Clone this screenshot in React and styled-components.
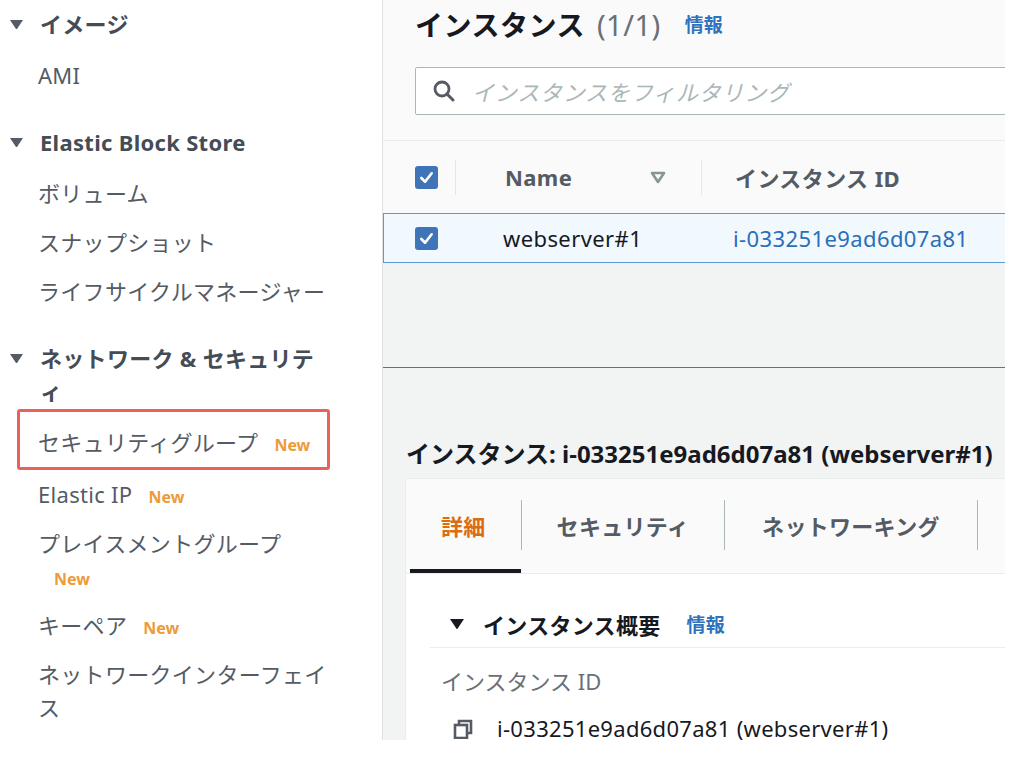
import React from 'react';
import styled, { createGlobalStyle } from 'styled-components';

const GlobalStyle = createGlobalStyle`
  html, body {
    margin: 0;
    padding: 0;
    background: #ffffff;
  }
  body {
    font-family: "Noto Sans", "Noto Sans CJK JP", sans-serif;
    -webkit-font-smoothing: antialiased;
  }
  * {
    box-sizing: border-box;
  }
`;

const Page = styled.div`
  display: flex;
  width: 1005px;
  height: 740px;
  overflow: hidden;
`;

/* ---------- side navigation ---------- */

const Sidebar = styled.nav`
  width: 383px;
  flex-shrink: 0;
  background: #ffffff;
  border-right: 1px solid #dfe2e4;
  color: #545b64;
  letter-spacing: 0.3px;
`;

const Section = styled.section`
  margin-bottom: 18px;
`;

const SectionHeading = styled.div`
  display: flex;
  align-items: flex-start;
  width: 331px;
  padding: 8px 0 10px 10px;
  font-size: 22px;
  font-weight: 700;
  line-height: 33px;
  color: #454c55;
`;

const CaretBox = styled.span`
  display: flex;
  align-items: center;
  width: 30px;
  height: 33px;
  flex-shrink: 0;
`;

const NavItem = styled.div`
  width: ${p => (p.$highlight ? '313px' : '331px')};
  margin: ${p => (p.$highlight ? '-9px 0 0 17px' : '0')};
  padding: ${p => (p.$highlight ? '14px 0 8px 18px' : '8px 0 8px 38px')};
  border: ${p => (p.$highlight ? '3px solid #e8625b' : 'none')};
  border-radius: 3px;
  font-size: 22px;
  line-height: 33px;
  color: #545b64;
`;

const NewBadge = styled.span`
  display: inline-block;
  margin-left: 16px;
  font-size: 16px;
  line-height: 1;
  font-weight: 700;
  letter-spacing: 0;
  color: #ec9b3b;
`;

const Caret = ({ size = 13, color = '#545b64' }) => (
  <svg width={size} height={size * 0.75} viewBox="0 0 12 9">
    <path d="M0 0 H12 L6 9 Z" fill={color} />
  </svg>
);

/* ---------- main area ---------- */

const Main = styled.main`
  flex: 1;
  min-width: 0;
  display: flex;
  flex-direction: column;
  background: #f2f3f3;
  overflow: hidden;
`;

const TablePanel = styled.div`
  background: #fafafa;
`;

const TitleRow = styled.div`
  display: flex;
  align-items: center;
  height: 48px;
  padding-left: 32px;
  white-space: nowrap;
`;

const Title = styled.h1`
  margin: 0;
  font-size: 28px;
  font-weight: 700;
  color: #16191f;
  letter-spacing: 0.5px;
`;

const Count = styled.span`
  margin-left: 12px;
  font-size: 29px;
  font-weight: 400;
  color: #687078;
  letter-spacing: 0.5px;
`;

const InfoLink = styled.span`
  margin-left: ${p => p.$gap || 24}px;
  font-size: 19px;
  font-weight: 700;
  color: #2f72bd;
`;

const SearchRow = styled.div`
  margin-top: 19px;
  padding-left: 32px;
`;

const SearchBox = styled.div`
  display: flex;
  align-items: center;
  gap: 17px;
  width: 660px;
  height: 48px;
  padding-left: 17px;
  background: #ffffff;
  border: 1px solid #aab7b8;
  border-radius: 2px;
`;

const Placeholder = styled.span`
  font-size: 22px;
  font-style: italic;
  color: #aab7b8;
  letter-spacing: 0.8px;
  white-space: nowrap;
`;

const Table = styled.div`
  margin-top: 25px;
  border-top: 1px solid #eaeded;
`;

const HeaderRow = styled.div`
  display: flex;
  align-items: center;
  height: 72px;
  white-space: nowrap;
`;

const DataRow = styled.div`
  display: flex;
  align-items: center;
  height: 50px;
  background: #f1f8fe;
  border: 1px solid #5b9bd1;
  border-right: none;
  white-space: nowrap;
`;

const CheckCell = styled.div`
  display: flex;
  align-items: center;
  width: ${p => p.$w}px;
  padding-left: ${p => p.$pad}px;
  flex-shrink: 0;
`;

const ColSep = styled.span`
  width: 1px;
  height: 35px;
  background: #e4e7e8;
  flex-shrink: 0;
`;

const Cell = styled.div`
  display: flex;
  align-items: center;
  justify-content: space-between;
  width: ${p => (p.$w ? `${p.$w}px` : 'auto')};
  flex: ${p => (p.$w ? '0 0 auto' : '1')};
  padding-left: ${p => p.$pad}px;
  padding-right: ${p => p.$padRight || 0}px;
  font-size: 22px;
  font-weight: ${p => (p.$head ? 700 : 400)};
  color: ${p => (p.$link ? '#2a6fb8' : p.$head ? '#545b64' : '#16191f')};
  letter-spacing: 0.4px;
`;

const Checkbox = styled.span`
  display: flex;
  align-items: center;
  justify-content: center;
  width: 23px;
  height: 23px;
  border-radius: 3px;
  background: #3f75b8;
`;

const CheckIcon = () => (
  <Checkbox>
    <svg width="15" height="15" viewBox="0 0 16 16">
      <path d="M2.5 8.5 L6.5 12.5 L13.5 3.5" fill="none" stroke="#ffffff" strokeWidth="2.8" strokeLinecap="round" strokeLinejoin="round" />
    </svg>
  </Checkbox>
);

const SortIcon = () => (
  <svg width="16" height="13" viewBox="0 0 16 13">
    <path d="M2 2 H14 L8 11 Z" fill="none" stroke="#879596" strokeWidth="2.6" strokeLinejoin="round" />
  </svg>
);

const SearchIcon = () => (
  <svg width="22" height="22" viewBox="0 0 22 22">
    <circle cx="9" cy="9" r="7" fill="none" stroke="#545b64" strokeWidth="2.8" />
    <path d="M14 14 L20 20" stroke="#545b64" strokeWidth="3" strokeLinecap="round" />
  </svg>
);

/* ---------- split panel ---------- */

const SplitDivider = styled.div`
  margin-top: 104px;
  border-top: 1px solid #687078;
`;

const DetailPane = styled.div`
  padding: 69px 0 0 22px;
`;

const DetailHeading = styled.h2`
  margin: 0 0 0 1px;
  font-size: 24px;
  line-height: 33px;
  font-weight: 700;
  color: #16191f;
  white-space: nowrap;
`;

const Card = styled.div`
  margin-top: 8px;
  width: 700px;
  background: #fafafa;
  border-top: 1px solid #eaeded;
  border-left: 1px solid #eaeded;
`;

const TabBar = styled.div`
  display: flex;
  padding-top: 21px;
  border-bottom: 1px solid #eaeded;
`;

const Tab = styled.div`
  display: flex;
  flex-direction: column;
`;

const TabHead = styled.div`
  display: flex;
  align-items: center;
  height: 50px;
  padding: 0 ${p => p.$pad || 35}px;
  border-right: 1px solid #aab7b8;
  font-size: 22px;
  font-weight: 700;
  letter-spacing: 0.3px;
  white-space: nowrap;
  color: ${p => (p.$active ? '#dd6b10' : '#545b64')};
`;

const TabUnderline = styled.div`
  height: 4px;
  margin: 19px 1px 0 4px;
  background: ${p => (p.$active ? '#16191f' : 'transparent')};
`;

const CardBody = styled.div`
  background: #ffffff;
  padding: 0 0 40px 24px;
`;

const SubHeader = styled.div`
  display: flex;
  align-items: center;
  height: 74px;
  padding: 34px 0 7px 20px;
  border-bottom: 1px solid #eaeded;
  font-size: 22px;
  font-weight: 700;
  color: #16191f;
  letter-spacing: 0.3px;
  white-space: nowrap;
`;

const SubCaret = styled.span`
  display: flex;
  width: 33px;
`;

const FieldLabel = styled.div`
  margin-top: 17px;
  padding-left: 11px;
  font-size: 22px;
  line-height: 33px;
  color: #687078;
`;

const FieldValue = styled.div`
  display: flex;
  align-items: center;
  gap: 24px;
  margin-top: 14px;
  padding-left: 23px;
  font-size: 22px;
  line-height: 33px;
  color: #16191f;
  letter-spacing: 0.3px;
  white-space: nowrap;
`;

const CopyIcon = () => (
  <svg width="20" height="20" viewBox="0 0 20 20">
    <path d="M6 5 V2 H18 V14 H15" fill="none" stroke="#545b64" strokeWidth="2.6" />
    <rect x="2" y="6" width="12" height="13" fill="none" stroke="#545b64" strokeWidth="2.6" />
  </svg>
);

const navSections = [
  { title: 'イメージ', items: [{ label: 'AMI' }] },
  {
    title: 'Elastic Block Store',
    items: [{ label: 'ボリューム' }, { label: 'スナップショット' }, { label: 'ライフサイクルマネージャー' }],
  },
  {
    title: 'ネットワーク & セキュリティ',
    items: [
      { label: 'セキュリティグループ', isNew: true, highlight: true },
      { label: 'Elastic IP', isNew: true },
      { label: 'プレイスメントグループ', isNew: true },
      { label: 'キーペア', isNew: true },
      { label: 'ネットワークインターフェイス' },
    ],
  },
];

export default function App() {
  return (
    <>
      <GlobalStyle />
      <Page>
        <Sidebar>
          {navSections.map(section => (
            <Section key={section.title}>
              <SectionHeading>
                <CaretBox>
                  <Caret />
                </CaretBox>
                <span>{section.title}</span>
              </SectionHeading>
              {section.items.map(item => (
                <NavItem key={item.label} $highlight={item.highlight}>
                  {item.label}
                  {item.isNew && <NewBadge>New</NewBadge>}
                </NavItem>
              ))}
            </Section>
          ))}
        </Sidebar>

        <Main>
          <TablePanel>
            <TitleRow>
              <Title>インスタンス</Title>
              <Count>(1/1)</Count>
              <InfoLink>情報</InfoLink>
            </TitleRow>
            <SearchRow>
              <SearchBox>
                <SearchIcon />
                <Placeholder>インスタンスをフィルタリング</Placeholder>
              </SearchBox>
            </SearchRow>
            <Table>
              <HeaderRow>
                <CheckCell $w={72} $pad={32}>
                  <CheckIcon />
                </CheckCell>
                <ColSep />
                <Cell $w={245} $pad={49} $padRight={35} $head>
                  Name
                  <SortIcon />
                </Cell>
                <ColSep />
                <Cell $pad={33} $head>
                  インスタンス ID
                </Cell>
              </HeaderRow>
              <DataRow>
                <CheckCell $w={72} $pad={31}>
                  <CheckIcon />
                </CheckCell>
                <Cell $w={246} $pad={47}>
                  webserver#1
                </Cell>
                <Cell $pad={31} $link>
                  i-033251e9ad6d07a81
                </Cell>
              </DataRow>
            </Table>
          </TablePanel>

          <SplitDivider />
          <DetailPane>
            <DetailHeading>インスタンス: i-033251e9ad6d07a81 (webserver#1)</DetailHeading>
            <Card>
              <TabBar>
                <Tab>
                  <TabHead $active>詳細</TabHead>
                  <TabUnderline $active />
                </Tab>
                <Tab>
                  <TabHead>セキュリティ</TabHead>
                  <TabUnderline />
                </Tab>
                <Tab>
                  <TabHead $pad={37}>ネットワーキング</TabHead>
                  <TabUnderline />
                </Tab>
              </TabBar>
              <CardBody>
                <SubHeader>
                  <SubCaret>
                    <Caret size={14} color="#16191f" />
                  </SubCaret>
                  インスタンス概要
                  <InfoLink $gap={26}>情報</InfoLink>
                </SubHeader>
                <FieldLabel>インスタンス ID</FieldLabel>
                <FieldValue>
                  <CopyIcon />
                  i-033251e9ad6d07a81 (webserver#1)
                </FieldValue>
              </CardBody>
            </Card>
          </DetailPane>
        </Main>
      </Page>
    </>
  );
}
